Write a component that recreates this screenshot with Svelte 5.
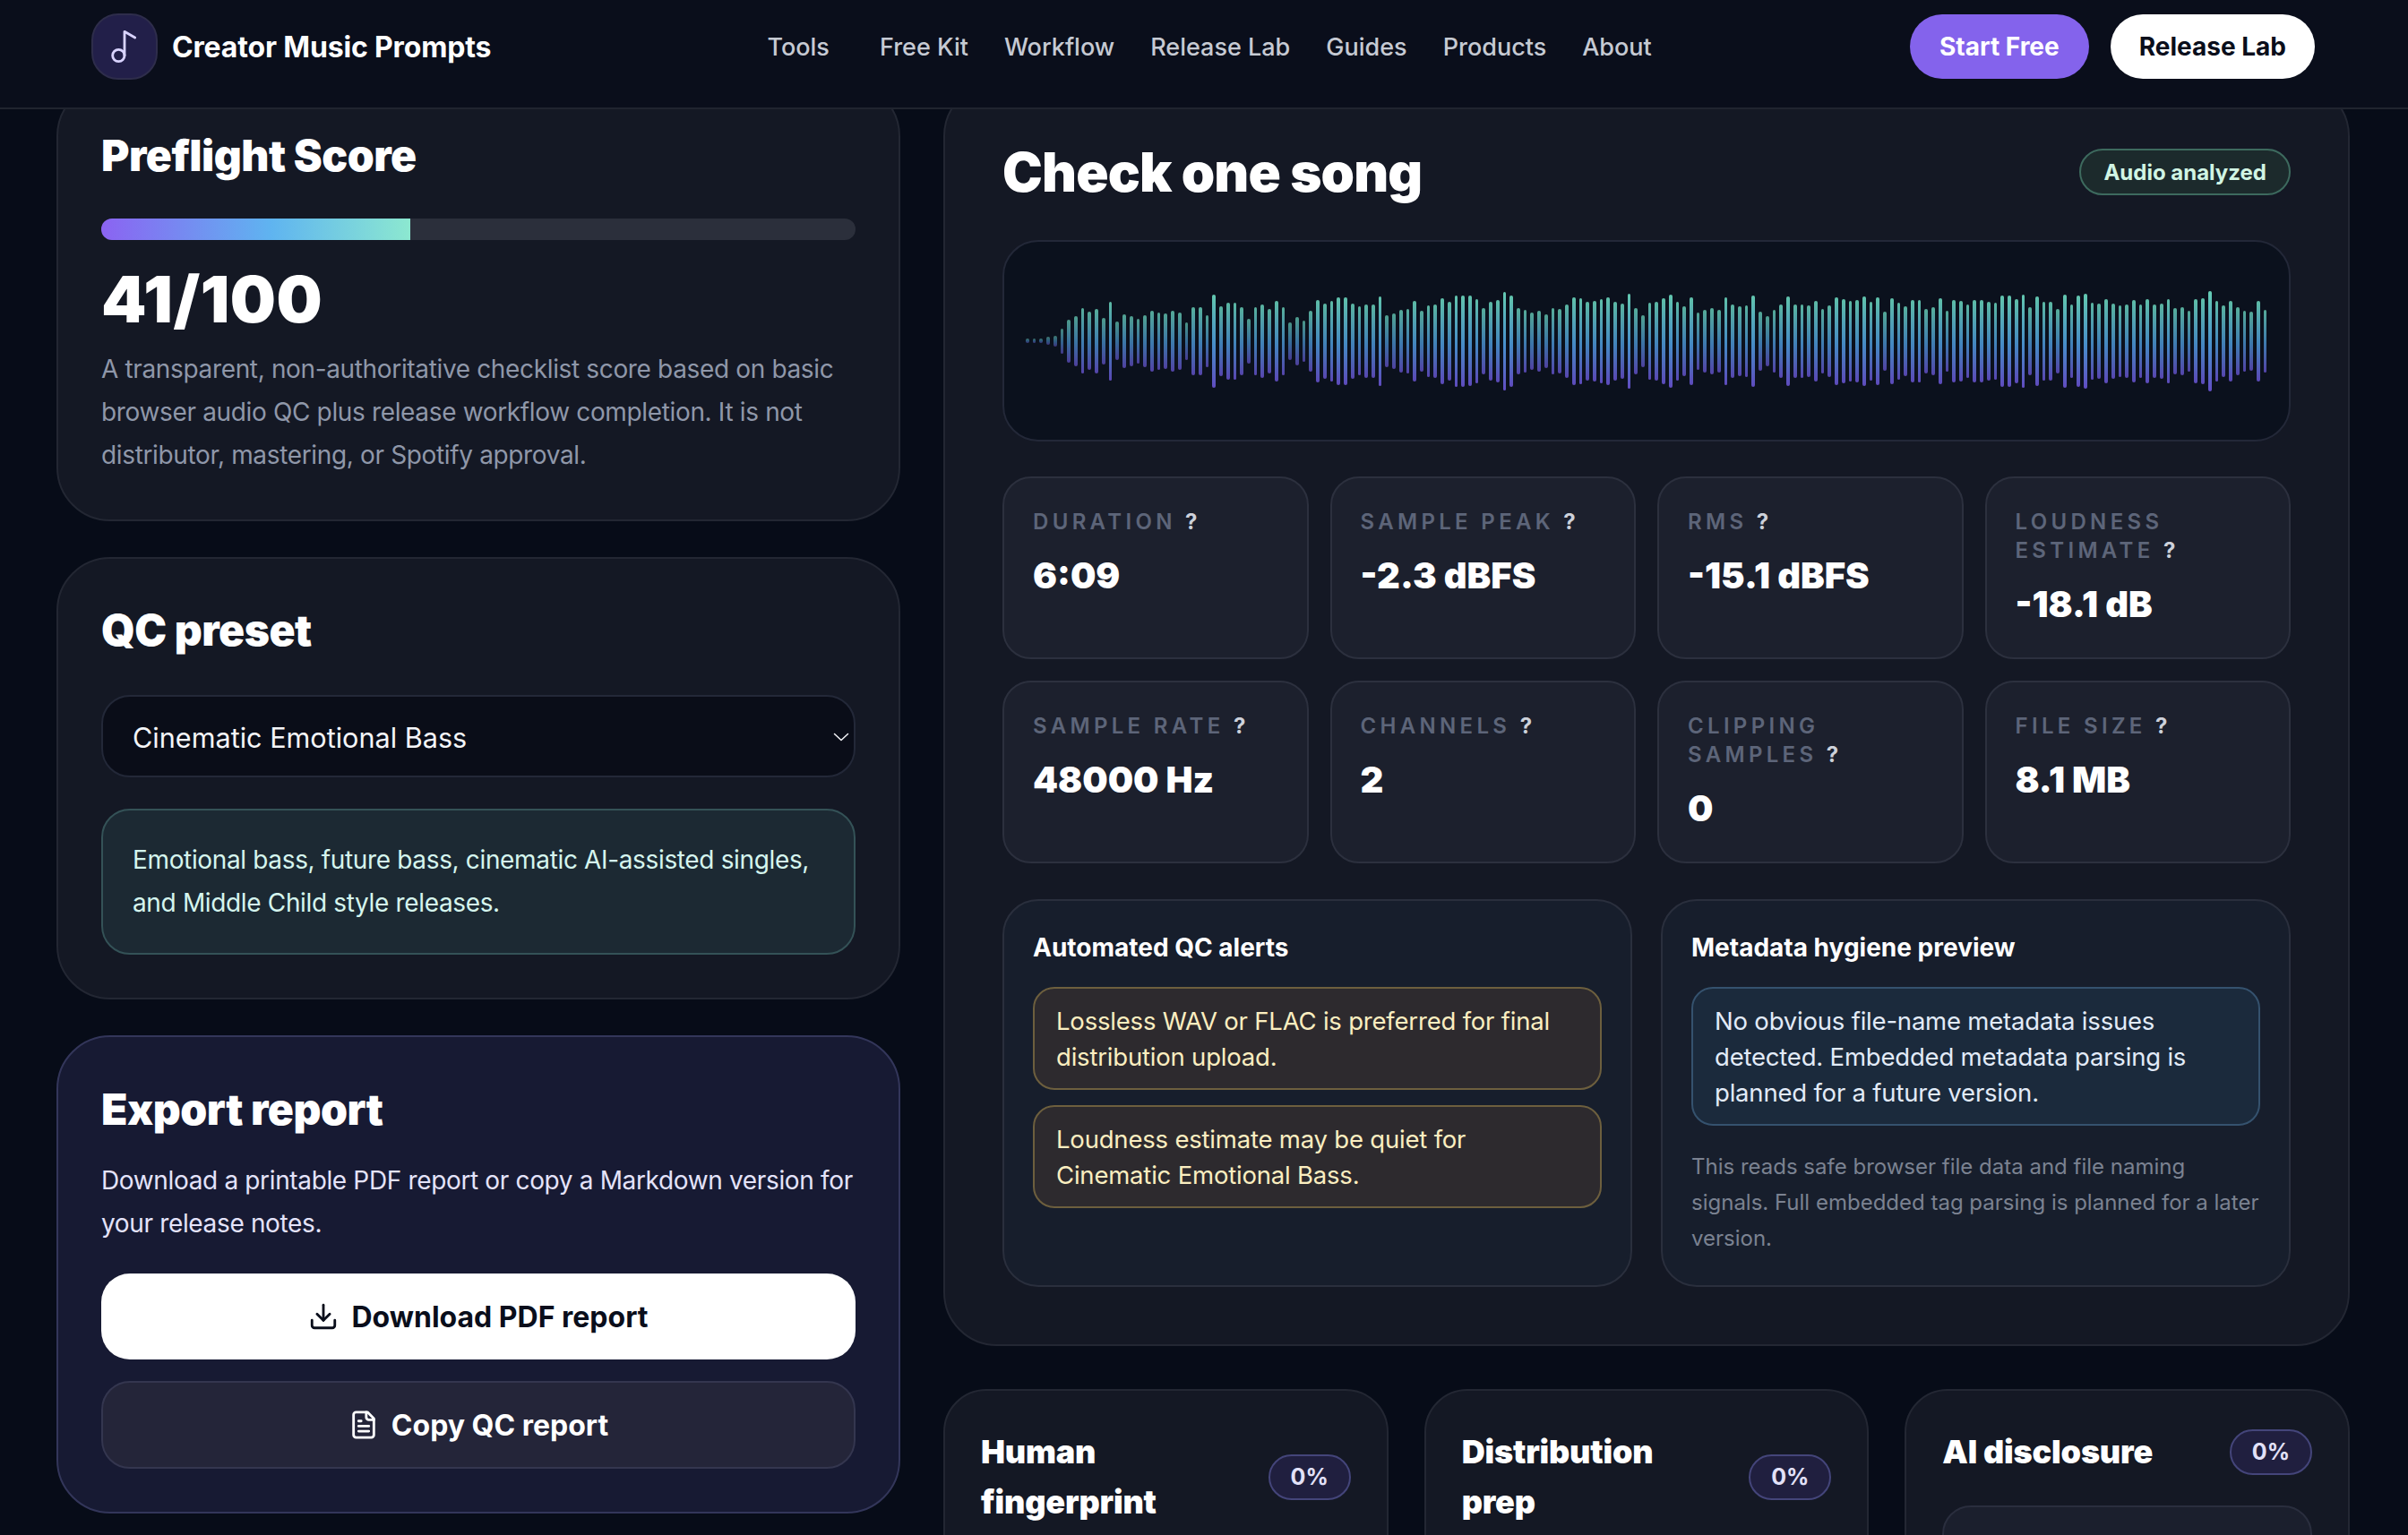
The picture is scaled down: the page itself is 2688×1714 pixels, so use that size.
<script lang="ts">
	const navLinks = ['Tools', 'Free Kit', 'Workflow', 'Release Lab', 'Guides', 'Products', 'About'];

	const metrics = [
		{ label: 'Duration', value: '6:09' },
		{ label: 'Sample peak', value: '-2.3 dBFS' },
		{ label: 'RMS', value: '-15.1 dBFS' },
		{ label: 'Loudness estimate', value: '-18.1 dB' },
		{ label: 'Sample rate', value: '48000 Hz' },
		{ label: 'Channels', value: '2' },
		{ label: 'Clipping samples', value: '0' },
		{ label: 'File size', value: '8.1 MB' }
	];

	const checklists = [
		{ title: 'Human fingerprint', pct: '0%' },
		{ title: 'Distribution prep', pct: '0%' },
		{ title: 'AI disclosure', pct: '0%' }
	];

	const peaks = [
		5, 5, 5, 9, 12, 28, 48, 56, 73, 65, 72, 52, 88, 43, 60, 56, 50, 58, 68, 64, 62, 68, 64, 42, 76, 76,
		58, 104, 78, 86, 86, 76, 50, 76, 82, 72, 90, 76, 42, 54, 46, 68, 92, 84, 90, 98, 98, 84, 77, 82, 82,
		100, 58, 62, 70, 72, 90, 68, 80, 82, 96, 88, 102, 102, 101, 94, 74, 88, 92, 110, 102, 74, 70, 64, 68,
		60, 74, 72, 82, 98, 96, 88, 90, 94, 98, 88, 84, 106, 74, 58, 86, 88, 96, 104, 88, 78, 98, 64, 70, 74,
		70, 98, 82, 78, 80, 102, 66, 56, 70, 82, 100, 82, 82, 80, 90, 72, 80, 98, 94, 90, 92, 100, 88, 98, 66,
		96, 86, 78, 92, 92, 72, 76, 96, 68, 92, 90, 82, 92, 92, 88, 86, 102, 102, 94, 104, 76, 100, 88, 88, 72,
		104, 82, 102, 106, 86, 84, 94, 84, 80, 82, 92, 82, 94, 82, 84, 94, 74, 76, 68, 94, 96, 112, 90, 80, 90,
		76, 68, 66, 90, 70
	];
</script>

<header class="topbar">
	<a class="brand" href="#top">
		<span class="brand-mark">
			<svg viewBox="0 0 24 24" width="40" height="40" fill="none" stroke="currentColor" stroke-width="1.7" stroke-linecap="round" stroke-linejoin="round">
				<circle cx="8" cy="18" r="4" />
				<path d="M12 18V2l7 4" />
			</svg>
		</span>
		Creator Music Prompts
	</a>
	<nav class="nav">
		{#each navLinks as link}
			<a href="#top">{link}</a>
		{/each}
	</nav>
	<div class="actions">
		<a class="pill violet" href="#top">Start Free</a>
		<a class="pill white" href="#top">Release Lab</a>
	</div>
</header>

<div class="scroller">
	<main class="layout">
		<aside class="side">
			<section class="card">
				<h2>Preflight Score</h2>
				<div class="track"><div class="fill" style="width: 41%"></div></div>
				<div class="score">41/100</div>
				<p class="muted">
					A transparent, non-authoritative checklist score based on basic browser audio QC plus release workflow completion. It is not distributor, mastering, or Spotify approval.
				</p>
			</section>

			<section class="card">
				<h2>QC preset</h2>
				<div class="select">
					Cinematic Emotional Bass
					<svg viewBox="0 0 18 10" width="18" height="10" fill="none" stroke="currentColor" stroke-width="1.5" stroke-linecap="round" stroke-linejoin="round">
						<path d="M1.5 1.5 9 8.5l7.5-7" />
					</svg>
				</div>
				<div class="preset-note">
					Emotional bass, future bass, cinematic AI-assisted singles, and Middle Child style releases.
				</div>
			</section>

			<section class="card export">
				<h2>Export report</h2>
				<p class="export-copy">Download a printable PDF report or copy a Markdown version for your release notes.</p>
				<button class="btn solid">
					<svg viewBox="0 0 24 24" width="34" height="34" fill="none" stroke="currentColor" stroke-width="2" stroke-linecap="round" stroke-linejoin="round">
						<path d="M21 15v4a2 2 0 0 1-2 2H5a2 2 0 0 1-2-2v-4" />
						<polyline points="7 10 12 15 17 10" />
						<line x1="12" y1="15" x2="12" y2="3" />
					</svg>
					Download PDF report
				</button>
				<button class="btn ghost">
					<svg viewBox="0 0 24 24" width="34" height="34" fill="none" stroke="currentColor" stroke-width="2" stroke-linecap="round" stroke-linejoin="round">
						<path d="M15 2H6a2 2 0 0 0-2 2v16a2 2 0 0 0 2 2h12a2 2 0 0 0 2-2V7Z" />
						<path d="M14 2v4a2 2 0 0 0 2 2h4" />
						<path d="M10 9H8" />
						<path d="M16 13H8" />
						<path d="M16 17H8" />
					</svg>
					Copy QC report
				</button>
			</section>
		</aside>

		<div class="content">
			<section class="card song">
				<div class="song-head">
					<h1>Check one song</h1>
					<span class="status">Audio analyzed</span>
				</div>

				<div class="wave">
					{#each peaks as peak}
						<span class="bar" style="height: {peak}px; opacity: {(0.5 + (0.46 * peak) / 112).toFixed(2)}"></span>
					{/each}
				</div>

				<div class="metrics">
					{#each metrics as metric}
						<div class="metric">
							<div class="metric-label">{metric.label} <b>?</b></div>
							<div class="metric-value">{metric.value}</div>
						</div>
					{/each}
				</div>

				<div class="panels">
					<div class="panel">
						<h3>Automated QC alerts</h3>
						<div class="alert">Lossless WAV or FLAC is preferred for final distribution upload.</div>
						<div class="alert">Loudness estimate may be quiet for Cinematic Emotional Bass.</div>
					</div>
					<div class="panel">
						<h3>Metadata hygiene preview</h3>
						<div class="info">No obvious file-name metadata issues detected. Embedded metadata parsing is planned for a future version.</div>
						<p class="fine">This reads safe browser file data and file naming signals. Full embedded tag parsing is planned for a later version.</p>
					</div>
				</div>
			</section>

			<div class="checklists">
				{#each checklists as list}
					<section class="checklist">
						<div class="checklist-head">
							<h2>{list.title}</h2>
							<span class="pct">{list.pct}</span>
						</div>
						<div class="check-row"></div>
					</section>
				{/each}
			</div>
		</div>
	</main>
</div>

<style>
	:global(body) {
		background: #070c18;
		color: #fff;
		font-family: Inter, 'Liberation Sans', sans-serif;
		overflow: hidden;
	}

	a {
		color: inherit;
		text-decoration: none;
	}

	/* top bar */

	.topbar {
		height: 120px;
		box-sizing: content-box;
		padding: 0 104px 0 102px;
		display: flex;
		align-items: flex-start;
		justify-content: space-between;
		background: #0a0e1b;
		border-bottom: 2px solid #20242f;
	}

	.brand {
		height: 74px;
		margin-top: 15px;
		display: flex;
		align-items: center;
		gap: 16px;
		font-size: 32px;
		font-weight: 700;
		letter-spacing: -0.005em;
	}

	.brand-mark {
		width: 74px;
		height: 74px;
		box-sizing: border-box;
		display: grid;
		place-content: center;
		border-radius: 30px;
		border: 2px solid #2e2d4b;
		background: #221f49;
		color: #d9d3ff;
	}

	.nav {
		height: 72px;
		margin: 16px 0 0 20px;
		display: flex;
		align-items: center;
		gap: 40px;
		font-size: 27px;
		font-weight: 500;
		color: #c6cad3;
	}

	.nav a:first-child {
		margin-right: 16px;
	}

	.actions {
		margin-top: 16px;
		display: flex;
		gap: 24px;
	}

	.pill {
		height: 72px;
		padding: 0 32px;
		display: flex;
		align-items: center;
		border-radius: 36px;
		font-size: 28px;
		font-weight: 700;
	}

	.violet {
		padding: 0 33px;
		background: #8463ec;
	}

	.white {
		background: #fff;
		color: #0a0e1b;
	}

	/* page, scrolled a little past its top */

	.scroller {
		height: 1592px;
		overflow: hidden;
	}

	.layout {
		margin-top: -30px;
		padding: 0 65px 0 63px;
		display: grid;
		grid-template-columns: 942px 1fr;
		gap: 48px;
		align-items: start;
	}

	.side {
		display: flex;
		flex-direction: column;
		gap: 40px;
	}

	.card {
		padding: 48px;
		border: 2px solid #232733;
		border-radius: 60px;
		background: #141824;
	}

	.card h2 {
		margin: 0 0 40px;
		font-size: 48px;
		line-height: 64px;
		font-weight: 900;
		letter-spacing: -0.01em;
	}

	.track {
		height: 24px;
		margin-top: -2px;
		border-radius: 12px;
		overflow: hidden;
		background: #2b2f3b;
	}

	.fill {
		height: 100%;
		background: linear-gradient(90deg, #8b63f2, #5fb4f0 55%, #8ce8d0);
	}

	.score {
		margin: 24px 0 12px;
		font-size: 72px;
		line-height: 84px;
		font-weight: 900;
		letter-spacing: 0.008em;
	}

	.muted {
		margin: 0;
		font-size: 28px;
		line-height: 48px;
		letter-spacing: -0.35px;
		color: #8f97a9;
	}

	.select {
		height: 92px;
		box-sizing: border-box;
		padding: 2px 5px 0 33px;
		margin-bottom: 35px;
		display: flex;
		align-items: center;
		justify-content: space-between;
		font-size: 30.6px;
		color: #f4f5f8;
		background: #0a0d18;
		border: 2px solid #232838;
		border-radius: 32px;
	}

	.preset-note {
		padding: 31px 33px 32px;
		font-size: 28px;
		line-height: 48px;
		letter-spacing: -0.35px;
		color: #d5f5ee;
		background: #1c2933;
		border: 2px solid #345257;
		border-radius: 32px;
	}

	.export {
		padding-top: 49px;
		background: #171a33;
		border-color: #33365a;
	}

	.card.export h2 {
		margin-bottom: 23px;
	}

	.export-copy {
		margin: 0 0 32px;
		font-size: 28px;
		line-height: 48px;
		letter-spacing: -0.35px;
		color: #e4e3fa;
	}

	.btn {
		width: 100%;
		display: flex;
		align-items: center;
		justify-content: center;
		gap: 14px;
		border-radius: 32px;
		font-family: inherit;
		font-size: 32px;
		font-weight: 700;
	}

	.solid {
		height: 96px;
		margin-bottom: 24px;
		border: 0;
		background: #fff;
		color: #0a0e1b;
	}

	.ghost {
		height: 98px;
		background: #242539;
		border: 2px solid #34364f;
		color: #fff;
	}

	/* song check */

	.song {
		padding: 62px 64px 64px;
	}

	.song-head {
		height: 72px;
		margin-bottom: 40px;
		display: flex;
		align-items: center;
		justify-content: space-between;
	}

	h1 {
		margin: 0;
		font-size: 60px;
		font-weight: 900;
		letter-spacing: -0.014em;
	}

	.status {
		height: 52px;
		box-sizing: border-box;
		padding: 0 25px;
		display: flex;
		align-items: center;
		border-radius: 26px;
		font-size: 24px;
		font-weight: 700;
		color: #d1f5e4;
		background: #1c2a2c;
		border: 2px solid #3d6a5e;
	}

	.wave {
		height: 225px;
		box-sizing: border-box;
		padding: 0 24px;
		margin-bottom: 39px;
		display: flex;
		align-items: center;
		gap: 4px;
		background: #0b111d;
		border: 2px solid #232838;
		border-radius: 40px;
	}

	.bar {
		flex: 1;
		border-radius: 2px;
		background: linear-gradient(180deg, #69d5ba, #4b96d6 54%, #6650cc);
	}

	.metrics {
		display: grid;
		grid-template-columns: repeat(4, 1fr);
		gap: 24px;
		margin-bottom: 40px;
	}

	.metric {
		height: 204px;
		box-sizing: border-box;
		padding: 33px 32px 32px;
		background: #1c202d;
		border: 2px solid #2c303e;
		border-radius: 32px;
	}

	.metric-label {
		font-size: 24px;
		line-height: 32px;
		font-weight: 600;
		letter-spacing: 0.18em;
		text-transform: uppercase;
		color: #5d6579;
	}

	.metric-label b {
		color: #cdd1da;
		font-weight: 700;
	}

	.metric-value {
		margin-top: 17px;
		font-size: 40px;
		line-height: 54px;
		font-weight: 900;
	}

	.panels {
		display: grid;
		grid-template-columns: 1fr 1fr;
		gap: 32px;
	}

	.panel {
		min-height: 428px;
		box-sizing: border-box;
		padding: 32px;
		background: #171e2c;
		border: 2px solid #2a2f3d;
		border-radius: 40px;
	}

	h3 {
		margin: 0 0 24px;
		font-size: 28px;
		line-height: 40px;
		font-weight: 700;
	}

	.alert,
	.info {
		padding: 16px 24px 15px;
		font-size: 27.5px;
		line-height: 40px;
		letter-spacing: -0.2px;
		border-radius: 24px;
	}

	.alert {
		margin-bottom: 17px;
		color: #fbeec0;
		background: #2d2a2e;
		border: 2px solid #6d5f3e;
	}

	.info {
		color: #e2ebf8;
		background: #1b2a3c;
		border: 2px solid #35526e;
	}

	.fine {
		margin: 26px 0 0;
		font-size: 24px;
		line-height: 40px;
		color: #7b8291;
	}

	/* checklists, cut off by the fold */

	.checklists {
		margin-top: 48px;
		display: grid;
		grid-template-columns: repeat(3, 1fr);
		gap: 40px;
	}

	.checklist {
		padding: 40px;
		background: #141824;
		border: 2px solid #232733;
		border-radius: 48px;
	}

	.checklist-head {
		display: flex;
		align-items: center;
		justify-content: space-between;
		gap: 24px;
		margin-bottom: 32px;
	}

	.checklist h2 {
		margin: 0;
		font-size: 36px;
		line-height: 56px;
		font-weight: 900;
		letter-spacing: -0.005em;
	}

	.pct {
		flex: none;
		width: 92px;
		height: 51px;
		box-sizing: border-box;
		display: grid;
		place-content: center;
		border-radius: 26px;
		font-size: 25px;
		font-weight: 700;
		color: #e2e1f8;
		background: #201f3f;
		border: 2px solid #44457a;
	}

	.check-row {
		height: 120px;
		background: #1b1f2d;
		border: 2px solid #2a2e3e;
		border-radius: 32px;
	}
</style>
